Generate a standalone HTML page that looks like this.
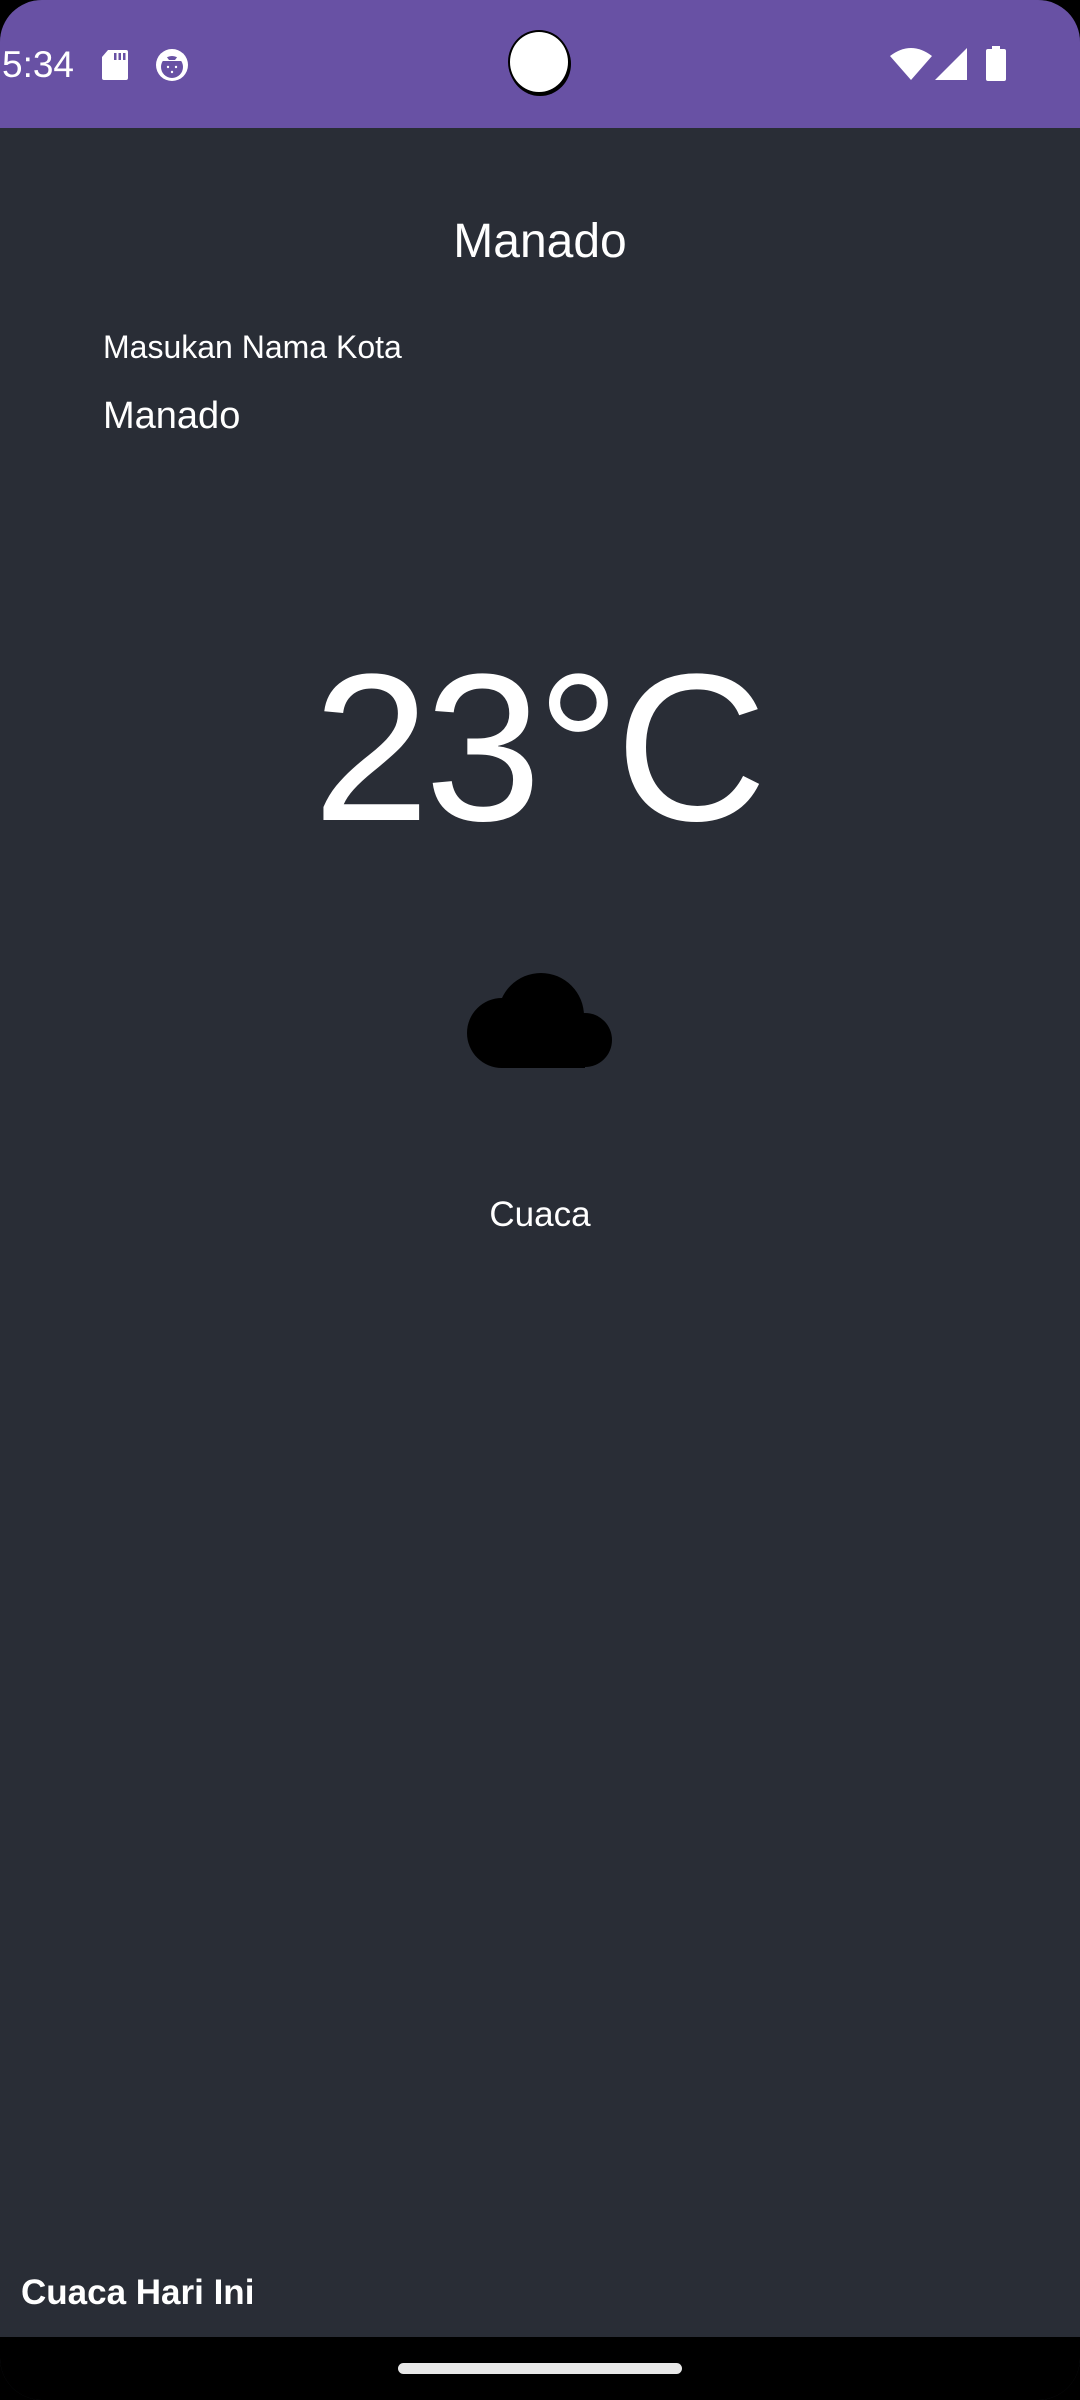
<!DOCTYPE html>
<html><head><meta charset="utf-8"><style>
html,body{margin:0;padding:0;}
body{width:1080px;height:2400px;background:#000;position:relative;overflow:hidden;font-family:"Liberation Sans",Arial,sans-serif;}
.screen{position:absolute;left:0;top:0;width:1080px;height:2400px;border-radius:42px;overflow:hidden;background:#292d36;}
.status{position:absolute;left:0;top:0;width:1080px;height:128px;background:#6851a4;}
.t{position:absolute;color:#fff;white-space:nowrap;line-height:1;}
.nav{position:absolute;left:0;top:2337px;width:1080px;height:63px;background:#000;}
</style></head><body>
<div class="screen">
<div class="status">
  <div class="t" style="left:2px;top:46px;font-size:37px;">5:34</div>
  <svg style="position:absolute;left:100px;top:48px" width="30" height="34" viewBox="0 0 30 34"><path d="M8 2h18a2 2 0 0 1 2 2v26a2 2 0 0 1-2 2H4a2 2 0 0 1-2-2V9z" fill="#fff"/><rect x="14" y="5" width="2.5" height="7" fill="#6851a4"/><rect x="18.5" y="5" width="2.5" height="7" fill="#6851a4"/><rect x="23" y="5" width="2.5" height="7" fill="#6851a4"/></svg>
  <svg style="position:absolute;left:154px;top:47px" width="36" height="36" viewBox="0 0 36 36"><circle cx="18" cy="18" r="16" fill="#fff"/><circle cx="18" cy="20" r="11" fill="#6851a4"/><path d="M8 14l4-5 3 4h6l3-4 4 5z" fill="#fff"/><circle cx="14" cy="20" r="1.2" fill="#fff"/><circle cx="22" cy="20" r="1.2" fill="#fff"/><circle cx="18" cy="25" r="1.2" fill="#fff"/></svg>
  <div style="position:absolute;left:508px;top:30px;width:62px;height:64px;border-radius:50%;background:#fff;border:2px solid #000;box-sizing:border-box;box-shadow:1px 2px 0 #000;"></div>
  <svg style="position:absolute;left:888px;top:46px" width="46" height="36" viewBox="0 0 46 36"><path d="M2 10 Q23 -6 44 10 L23 34 Z" fill="#fff"/></svg>
  <svg style="position:absolute;left:934px;top:47px" width="34" height="34" viewBox="0 0 34 34"><path d="M33 1V33H1Z" fill="#fff"/></svg>
  <svg style="position:absolute;left:986px;top:46px" width="20" height="36" viewBox="0 0 20 36"><rect x="6" y="0" width="8" height="5" fill="#fff"/><rect x="0" y="3" width="20" height="32" rx="2" fill="#fff"/></svg>
</div>
<div class="t" style="left:0;width:1080px;text-align:center;top:218px;font-size:48px;">Manado</div>
<div class="t" style="left:103px;top:331px;font-size:32px;">Masukan Nama Kota</div>
<div class="t" style="left:103px;top:397px;font-size:38px;">Manado</div>
<div class="t" style="left:0;width:1080px;text-align:center;top:643px;font-size:210px;letter-spacing:-5px;text-indent:-5px;">23°C</div>
<svg style="position:absolute;left:467px;top:973px" width="145" height="95" viewBox="0 0 145 95"><g fill="#000"><circle cx="74" cy="43" r="43"/><circle cx="35" cy="60" r="35"/><circle cx="118" cy="67" r="27"/><rect x="35" y="50" width="83" height="45"/></g></svg>
<div class="t" style="left:0;width:1080px;text-align:center;top:1197px;font-size:35px;">Cuaca</div>
<div class="t" style="left:21px;top:2275px;font-size:35px;font-weight:bold;">Cuaca Hari Ini</div>
<div class="nav"><div style="position:absolute;left:398px;top:26px;width:284px;height:11px;border-radius:6px;background:#e8e8e8;"></div></div>
</div>
</body></html>
